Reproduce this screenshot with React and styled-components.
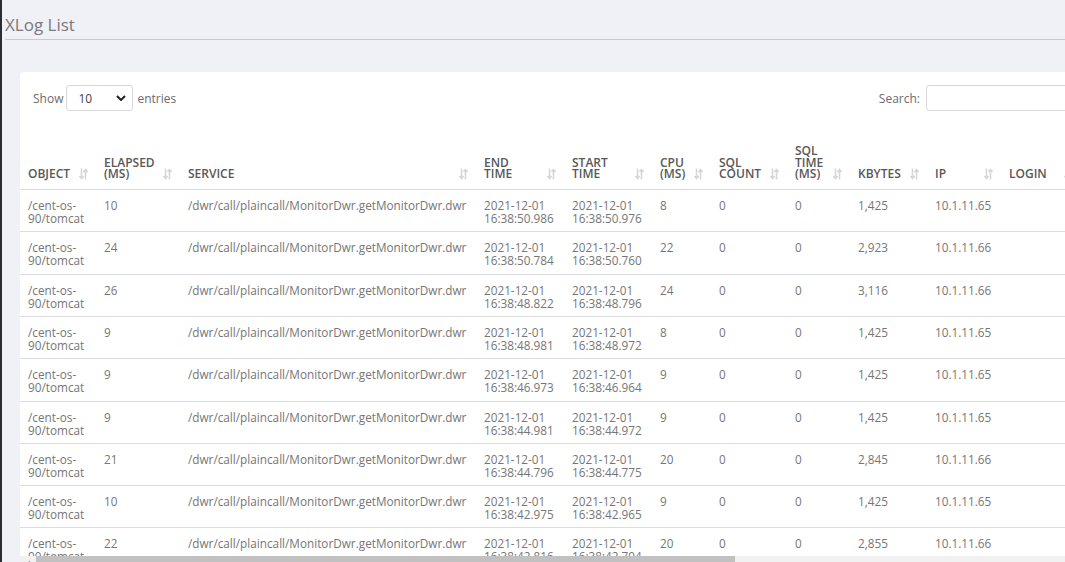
import React from "react";
import styled, { createGlobalStyle } from "styled-components";

const columns = [
  { key: "object", label: ["OBJECT"], width: 76 },
  { key: "elapsed", label: ["ELAPSED", "(MS)"], width: 84 },
  { key: "service", label: ["SERVICE"], width: 296 },
  { key: "end", label: ["END", "TIME"], width: 88 },
  { key: "start", label: ["START", "TIME"], width: 88 },
  { key: "cpu", label: ["CPU", "(MS)"], width: 59 },
  { key: "sqlCount", label: ["SQL", "COUNT"], width: 76 },
  { key: "sqlTime", label: ["SQL", "TIME", "(MS)"], width: 63 },
  { key: "kbytes", label: ["KBYTES"], width: 77 },
  { key: "ip", label: ["IP"], width: 74 },
  { key: "login", label: ["LOGIN"], width: 80 },
  { key: "error", label: ["ERROR"], width: 70 },
  { key: "desc", label: ["DESC"], width: 150 },
  { key: "gxid", label: ["GXID"], width: 150 },
  { key: "txid", label: ["TXID"], width: 159 },
];

const SERVICE = "/dwr/call/plaincall/MonitorDwr.getMonitorDwr.dwr";

const rows = [
  ["10", "16:38:50.986", "16:38:50.976", "8", "1,425", "10.1.11.65"],
  ["24", "16:38:50.784", "16:38:50.760", "22", "2,923", "10.1.11.66"],
  ["26", "16:38:48.822", "16:38:48.796", "24", "3,116", "10.1.11.66"],
  ["9", "16:38:48.981", "16:38:48.972", "8", "1,425", "10.1.11.65"],
  ["9", "16:38:46.973", "16:38:46.964", "9", "1,425", "10.1.11.65"],
  ["9", "16:38:44.981", "16:38:44.972", "9", "1,425", "10.1.11.65"],
  ["21", "16:38:44.796", "16:38:44.775", "20", "2,845", "10.1.11.66"],
  ["10", "16:38:42.975", "16:38:42.965", "9", "1,425", "10.1.11.65"],
  ["22", "16:38:42.816", "16:38:42.794", "20", "2,855", "10.1.11.66"],
];

function SortIcon() {
  return (
    <SortMark width="9" height="12" viewBox="0 0 9 12">
      <path d="M2.5 0.5v10M0.5 8l2 2.5 2-2.5" />
      <path d="M6.5 11.5V1.5M4.5 4l2-2.5 2 2.5" />
    </SortMark>
  );
}

export default function App() {
  return (
    <>
      <GlobalStyle />
      <Page>
        <EdgeStrip />
        <Main>
          <Title>XLog List</Title>
          <Card>
            <Controls>
              <Label>
                Show
                <SelectBox>
                  <span>10</span>
                  <Chevron viewBox="0 0 10 6" width="10" height="6">
                    <path d="M1 1l4 4 4-4" />
                  </Chevron>
                </SelectBox>
                entries
              </Label>
              <Label>
                Search:
                <SearchInput type="text" />
              </Label>
            </Controls>
            <TableScroll>
              <Table>
                <colgroup>
                  {columns.map((c) => (
                    <col key={c.key} style={{ width: c.width }} />
                  ))}
                </colgroup>
                <thead>
                  <tr>
                    {columns.map((c) => (
                      <HeadCell key={c.key}>
                        {c.label.map((line) => (
                          <div key={line}>{line}</div>
                        ))}
                        <SortIcon />
                      </HeadCell>
                    ))}
                  </tr>
                </thead>
                <tbody>
                  {rows.map((r, i) => (
                    <Row key={i}>
                      <Cell>/cent-os-<br />90/tomcat</Cell>
                      <Cell>{r[0]}</Cell>
                      <Cell>{SERVICE}</Cell>
                      <Cell>2021-12-01<br />{r[1]}</Cell>
                      <Cell>2021-12-01<br />{r[2]}</Cell>
                      <Cell>{r[3]}</Cell>
                      <Cell>0</Cell>
                      <Cell>0</Cell>
                      <Cell>{r[4]}</Cell>
                      <Cell>{r[5]}</Cell>
                      <Cell></Cell>
                      <Cell>0</Cell>
                      <Cell></Cell>
                      <Cell></Cell>
                      <Cell></Cell>
                    </Row>
                  ))}
                </tbody>
              </Table>
            </TableScroll>
            <ScrollTrack>
              <ScrollButton>
                <svg width="6" height="7" viewBox="0 0 6 7">
                  <path d="M5 0.5v6L0.5 3.5z" fill="#a3a3a3" />
                </svg>
              </ScrollButton>
              <ScrollThumb $width={699} />
            </ScrollTrack>
          </Card>
        </Main>
      </Page>
    </>
  );
}

const GlobalStyle = createGlobalStyle`
  html, body {
    margin: 0;
    height: 562px;
    overflow: hidden;
    background: #f0f1f6;
    font-family: "Open Sans", "Liberation Sans", sans-serif;
  }
`;

const Page = styled.div`
  display: flex;
  height: 562px;
  overflow: hidden;
`;

const EdgeStrip = styled.div`
  width: 2px;
  flex: none;
  background: #2c2b33;
`;

const Main = styled.div`
  flex: 1;
  min-width: 0;
  padding-left: 3px;
`;

const Title = styled.h1`
  margin: 13px 0 0;
  padding-bottom: 3px;
  border-bottom: 1px solid #c9cacf;
  font-size: 17px;
  line-height: 23px;
  font-weight: 400;
  color: #7a7a7a;
`;

const Card = styled.div`
  margin: 32px 0 0 15px;
  width: 1070px;
  background: #fff;
  border-radius: 4px 4px 0 0;
`;

const Controls = styled.div`
  display: flex;
  justify-content: space-between;
  align-items: center;
  padding: 13px 14px 0 13px;
  margin-bottom: 25px;
`;

const Label = styled.label`
  display: flex;
  align-items: center;
  gap: 4px;
  font-size: 12px;
  color: #6c6c6c;
`;

const SelectBox = styled.div`
  display: flex;
  align-items: center;
  justify-content: space-between;
  box-sizing: border-box;
  width: 67px;
  height: 26px;
  margin-left: -1px;
  padding: 0 6px 0 11px;
  border: 1px solid #d8d8dc;
  border-radius: 3px;
  font-size: 12px;
  color: #444;
`;

const Chevron = styled.svg`
  fill: none;
  stroke: #222;
  stroke-width: 2;
`;

const SearchInput = styled.input`
  box-sizing: border-box;
  width: 150px;
  height: 26px;
  margin-left: 2px;
  border: 1px solid #d8d8dc;
  border-radius: 3px;
  outline: none;
`;

const TableScroll = styled.div`
  height: 420px;
  overflow: hidden;
`;

const Table = styled.table`
  table-layout: fixed;
  width: 1590px;
  border-collapse: collapse;
`;

const HeadCell = styled.th`
  position: relative;
  vertical-align: bottom;
  text-align: left;
  padding: 9px 8px 9px 8px;
  border-bottom: 1px solid #dcdde1;
  font-size: 12px;
  line-height: 11.7px;
  font-weight: 600;
  color: #585858;
`;

const SortMark = styled.svg`
  position: absolute;
  right: 8px;
  bottom: 9px;
  fill: none;
  stroke: #d6d6d6;
  stroke-width: 1.6;
`;

const Row = styled.tr`
  border-bottom: 1px solid #dcdde1;
`;

const Cell = styled.td`
  vertical-align: top;
  padding: 9px 8px 6.3px 8px;
  font-size: 11.75px;
  line-height: 13px;
  color: #767676;
  white-space: nowrap;
`;

const ScrollTrack = styled.div`
  display: flex;
  align-items: stretch;
  height: 15px;
  background: #f1f1f1;
`;

const ScrollButton = styled.div`
  width: 16px;
  display: flex;
  align-items: center;
  justify-content: center;
`;

const ScrollThumb = styled.div`
  width: ${(p) => p.$width}px;
  background: #c1c1c1;
`;
